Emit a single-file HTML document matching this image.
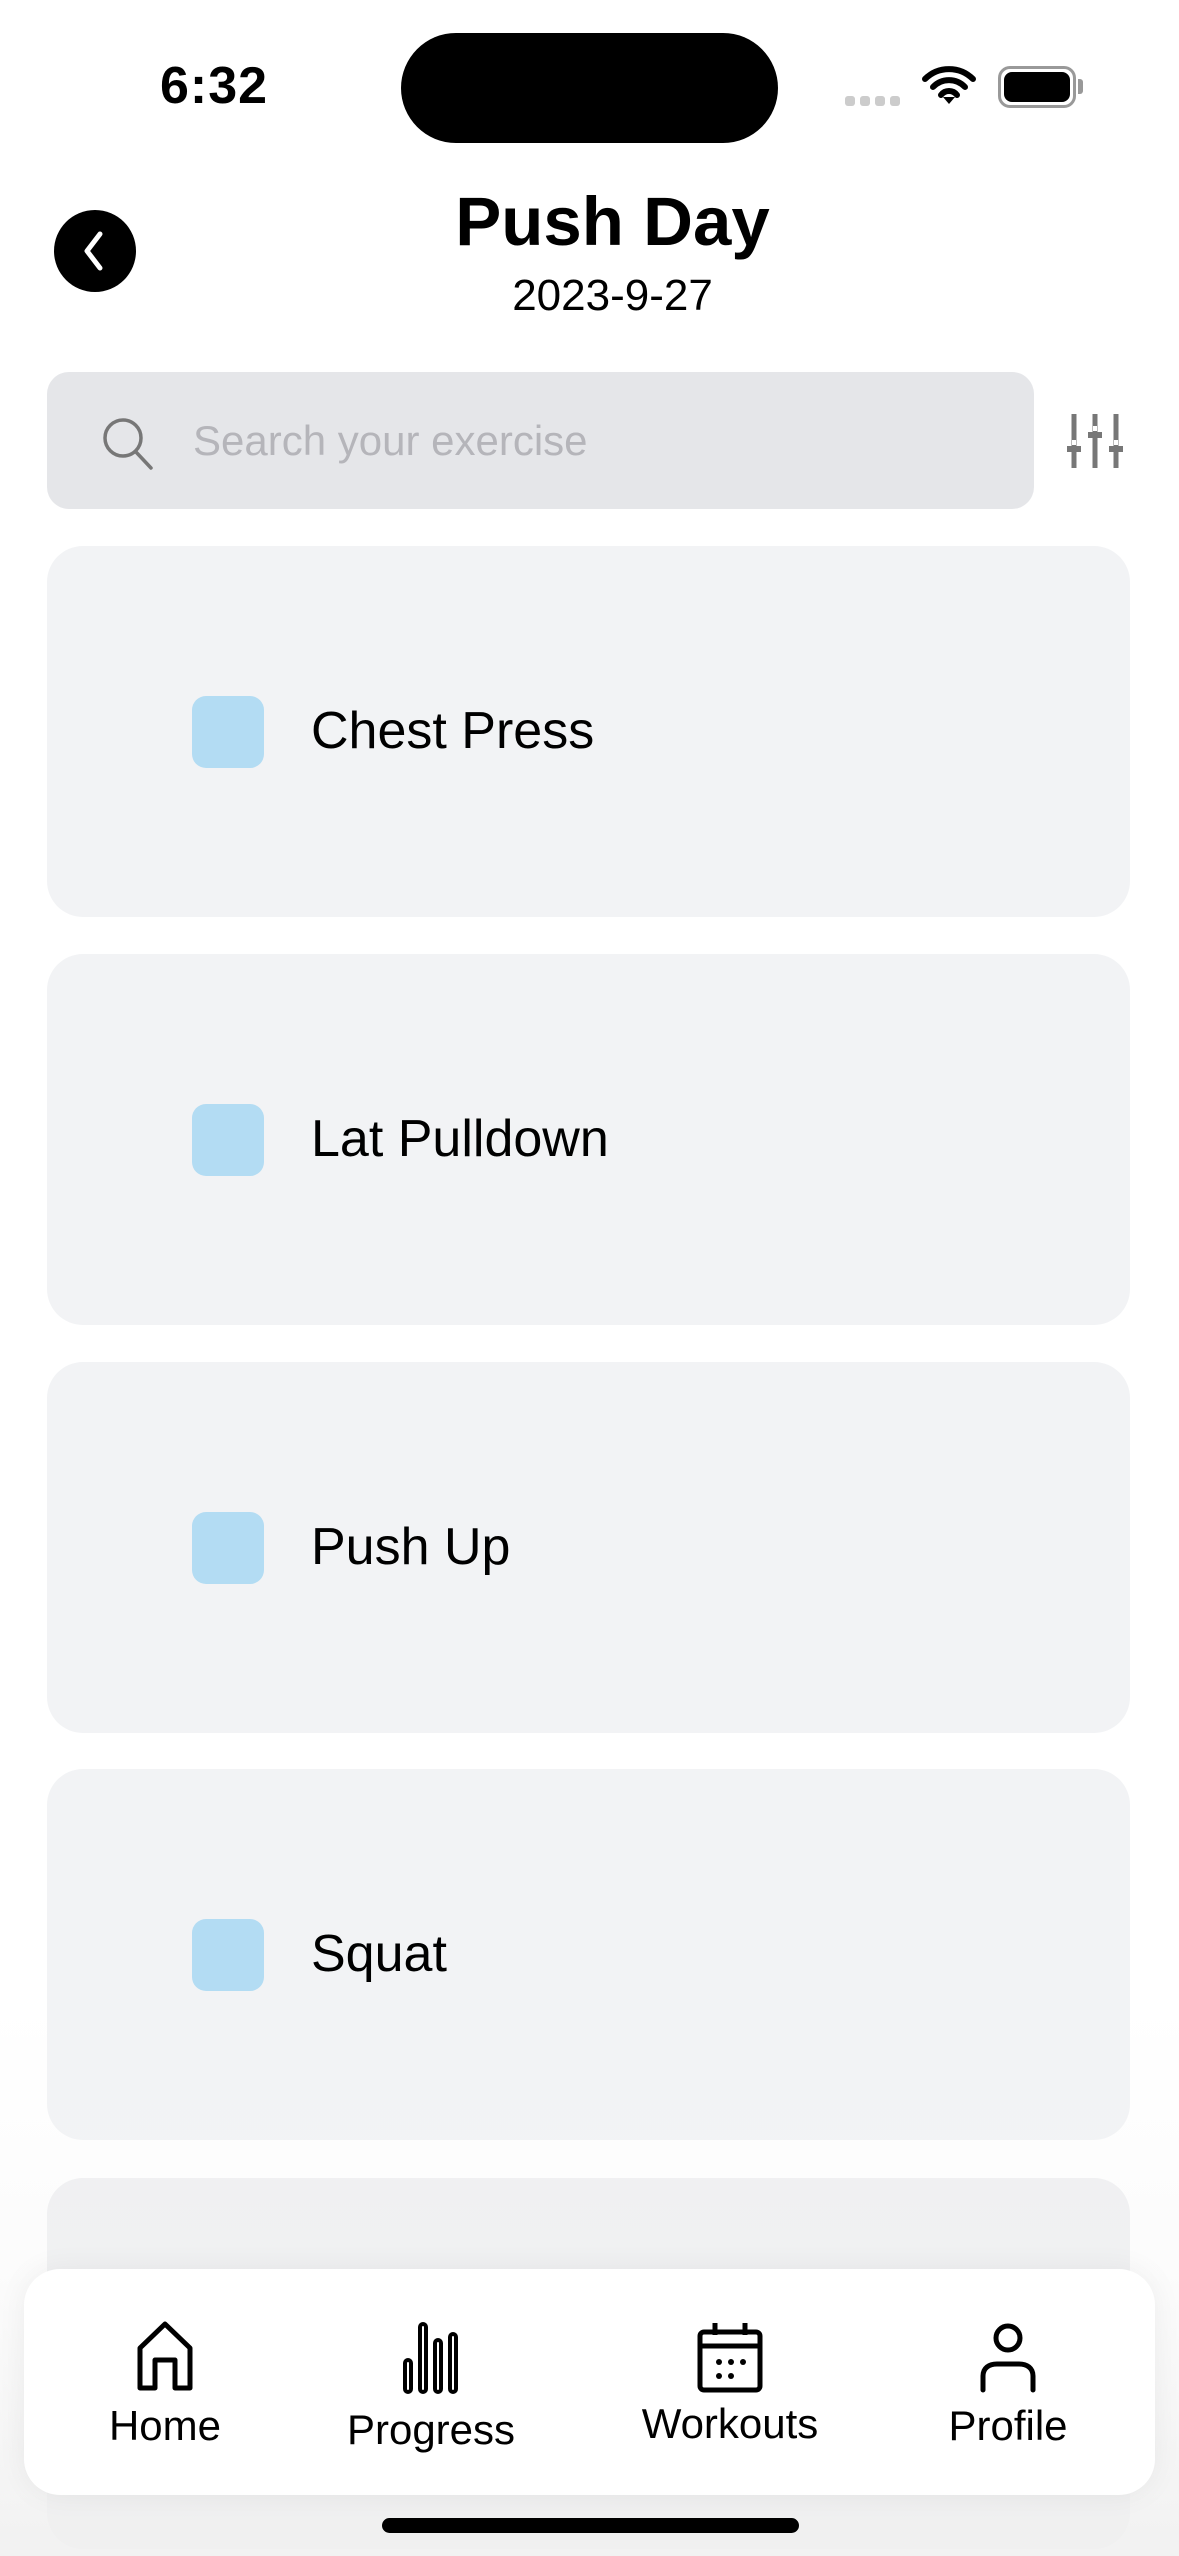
<!DOCTYPE html>
<html><head><meta charset="utf-8"><style>
*{margin:0;padding:0;box-sizing:border-box}
body{width:1179px;height:2556px;background:#fff;position:relative;overflow:hidden;font-family:"Liberation Sans",sans-serif;color:#000}
.abs{position:absolute}
.card{position:absolute;left:47px;width:1083px;height:371px;background:#f2f3f5;border-radius:36px}
.cb{position:absolute;left:145px;top:150px;width:72px;height:72px;background:#b3dcf3;border-radius:14px}
.lbl{position:absolute;left:264px;top:155px;font-size:52px;line-height:60px}
.tab{position:absolute;top:2320px;width:240px;text-align:center;font-size:42px}
.tab svg{display:block;margin:0 auto}
</style></head><body>
<div class="abs" style="left:160px;top:56px;font-size:52px;font-weight:bold;letter-spacing:1px">6:32</div>
<div class="abs" style="left:401px;top:33px;width:377px;height:110px;border-radius:55px;background:#000"></div>
<div class="abs" style="left:845px;top:96px;width:60px;height:10px">
<span class="abs" style="left:0;width:10px;height:10px;border-radius:3px;background:#ccc"></span>
<span class="abs" style="left:15px;width:10px;height:10px;border-radius:3px;background:#ccc"></span>
<span class="abs" style="left:30px;width:10px;height:10px;border-radius:3px;background:#ccc"></span>
<span class="abs" style="left:45px;width:10px;height:10px;border-radius:3px;background:#ccc"></span></div>
<svg class="abs" style="left:922px;top:66px" width="54" height="40" viewBox="0 0 54 40"><path d="M3 13a34 34 0 0 1 48 0M11 21a22 22 0 0 1 32 0M19 29a10 10 0 0 1 16 0" stroke="#000" stroke-width="6" fill="none" stroke-linecap="round"/><path d="M21 31l6 7 6-7z" fill="#000"/></svg>
<div class="abs" style="left:998px;top:66px;width:78px;height:42px;border:3px solid #999;border-radius:12px"><div style="margin:3px;height:30px;background:#000;border-radius:8px"></div></div>
<div class="abs" style="left:1078px;top:79px;width:5px;height:15px;background:#999;border-radius:0 3px 3px 0"></div>

<div class="abs" style="left:54px;top:210px;width:82px;height:82px;border-radius:50%;background:#000"></div>
<svg class="abs" style="left:54px;top:210px" width="82" height="82"><path d="M46 24L33 41l13 17" stroke="#fff" stroke-width="5" fill="none" stroke-linecap="round" stroke-linejoin="round"/></svg>
<div class="abs" style="left:0;width:1225px;top:182px;text-align:center;font-size:69px;font-weight:bold">Push Day</div>
<div class="abs" style="left:0;width:1225px;top:271px;text-align:center;font-size:44px">2023-9-27</div>

<div class="abs" style="left:47px;top:372px;width:987px;height:137px;background:#e5e6e9;border-radius:22px"></div>
<svg class="abs" style="left:98px;top:412px" width="62" height="62"><circle cx="25" cy="26" r="18" stroke="#777" stroke-width="3.5" fill="none"/><path d="M38 40l15 16" stroke="#777" stroke-width="3.5" stroke-linecap="round"/></svg>
<div class="abs" style="left:193px;top:417px;font-size:42px;color:#b5b5ba">Search your exercise</div>
<svg class="abs" style="left:1066px;top:412px" width="58" height="60"><g stroke="#777" stroke-width="5"><path d="M8 2v54M29 2v54M50 2v54"/></g><g fill="#777"><rect x="1" y="34" width="14" height="6"/><rect x="22" y="20" width="14" height="6"/><rect x="43" y="34" width="14" height="6"/></g><g stroke="#fff" stroke-width="4"><path d="M8 28v5M29 14v5M50 28v5"/></g></svg>

<div class="card" style="top:546px"><div class="cb"></div><div class="lbl">Chest Press</div></div>
<div class="card" style="top:954px"><div class="cb"></div><div class="lbl">Lat Pulldown</div></div>
<div class="card" style="top:1362px"><div class="cb"></div><div class="lbl">Push Up</div></div>
<div class="card" style="top:1769px"><div class="cb"></div><div class="lbl">Squat</div></div>
<div class="card" style="top:2178px;background:#eeeff1"></div>
<div class="abs" style="left:0;top:2000px;width:1179px;height:556px;background:linear-gradient(rgba(255,255,255,0),rgba(245,245,245,.35) 50%,rgba(240,240,240,.9))"></div>

<div class="abs" style="left:24px;top:2269px;width:1131px;height:226px;background:#fff;border-radius:36px;box-shadow:0 0 30px rgba(0,0,0,.06)"></div>
<div class="tab" style="left:45px"><svg width="70" height="74" viewBox="0 0 70 74"><path d="M10 68V28L35 4l25 24v40H45V40H25v28z" stroke="#000" stroke-width="5" fill="none" stroke-linejoin="round"/></svg><div style="margin-top:8px">Home</div></div>
<div class="tab" style="left:311px"><svg width="70" height="74" viewBox="0 0 70 74"><g stroke="#000" stroke-width="4" fill="none"><rect x="9" y="40" width="6" height="32" rx="3"/><rect x="24" y="4" width="6" height="68" rx="3"/><rect x="39" y="20" width="6" height="52" rx="3"/><rect x="54" y="14" width="6" height="58" rx="3"/></g></svg><div style="margin-top:12px">Progress</div></div>
<div class="tab" style="left:610px"><svg width="70" height="74" viewBox="0 0 70 74"><g stroke="#000" stroke-width="5" fill="none"><rect x="5" y="12" width="60" height="58" rx="4"/><path d="M5 26h60M20 3v12M50 3v12"/></g><g fill="#000"><circle cx="24" cy="42" r="3"/><circle cx="36" cy="42" r="3"/><circle cx="48" cy="42" r="3"/><circle cx="24" cy="56" r="3"/><circle cx="36" cy="56" r="3"/></g></svg><div style="margin-top:6px">Workouts</div></div>
<div class="tab" style="left:888px"><svg width="70" height="74" viewBox="0 0 70 74"><g stroke="#000" stroke-width="5" fill="none" stroke-linecap="round"><circle cx="35" cy="18" r="12"/><path d="M10 70V56c0-8 6-12 14-12h22c8 0 14 4 14 12v14"/></g></svg><div style="margin-top:8px">Profile</div></div>

<div class="abs" style="left:382px;top:2518px;width:417px;height:15px;border-radius:8px;background:#000"></div>
</body></html>
